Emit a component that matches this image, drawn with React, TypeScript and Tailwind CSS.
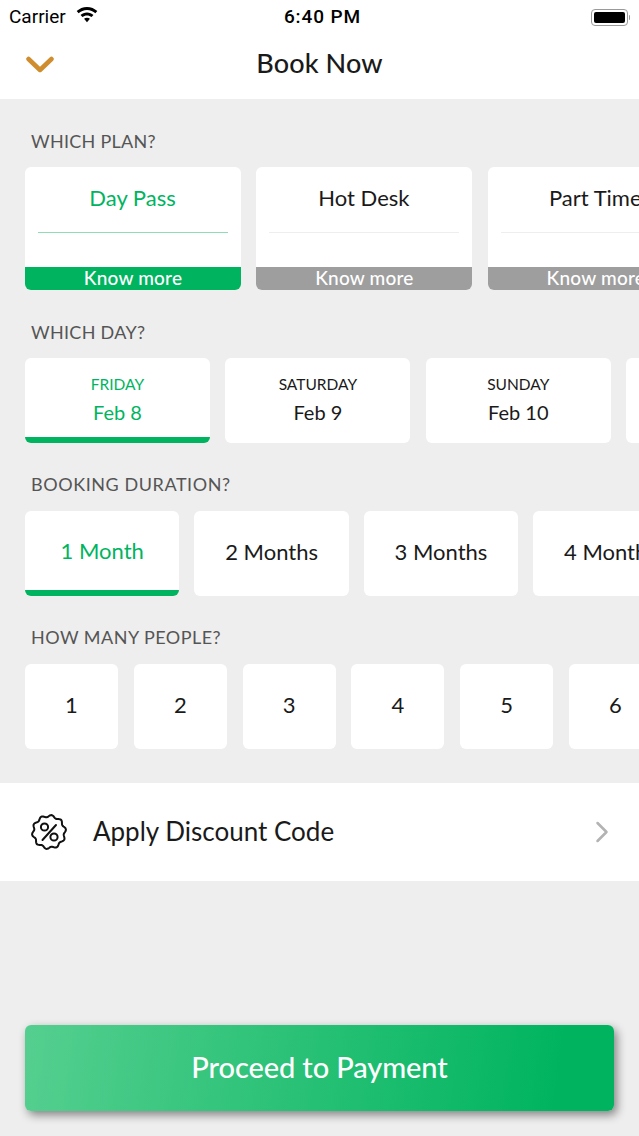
const font = { fontFamily: 'Lato, "Noto Sans", sans-serif' };

const plans = ['Day Pass', 'Hot Desk', 'Part Time'];
const days = [
  ['FRIDAY', 'Feb 8'],
  ['SATURDAY', 'Feb 9'],
  ['SUNDAY', 'Feb 10'],
  ['MONDAY', 'Feb 11'],
];
const durations = ['1 Month', '2 Months', '3 Months', '4 Months'];
const people = ['1', '2', '3', '4', '5', '6'];

const Label = ({ children, className }: { children: string; className: string }) => (
  <div className={`pl-[31px] text-[18px] leading-[22px] text-[#555555] ${className}`}>{children}</div>
);

// wavy badge outline, 10 lobes
const badge = Array.from({ length: 120 }, (_, i) => {
  const t = (i / 120) * Math.PI * 2;
  const r = 16 + 1.1 * Math.cos(10 * t + Math.PI / 2);
  return `${(18 + r * Math.cos(t)).toFixed(2)},${(18 + r * Math.sin(t)).toFixed(2)}`;
}).join(' ');

const DiscountIcon = () => (
  <svg width="36" height="36" viewBox="0 0 36 36" fill="none" stroke="#111" strokeWidth="2" strokeLinecap="round" strokeLinejoin="round">
    <polygon points={badge} />
    <circle cx="13.500" cy="13" r="3.600" />
    <circle cx="23" cy="23" r="3.600" />
    <path d="M25 11 11.500 26" />
  </svg>
);

export default function App() {
  return (
    <div className="h-[1136px] w-[639px] overflow-hidden bg-[#eeeeee] flex flex-col" style={font}>
      <div className="h-[99px] bg-white shrink-0">
        <div className="relative h-[33px] flex items-center pl-[9px] pr-[9px] pt-[1px] text-black" style={{ fontFamily: 'Roboto, "Liberation Sans", sans-serif' }}>
          <span className="text-[19px]">Carrier</span>
          <svg className="ml-[10px] mb-[3px]" width="22" height="17" viewBox="0 0 19 15" fill="black">
            <path d="M9.500 0C6 0 2.800 1.400.4 3.600l1.700 1.900C4 3.700 6.600 2.600 9.500 2.600s5.500 1.100 7.400 2.900l1.700-1.900C16.200 1.400 13 0 9.500 0z" />
            <path d="M9.500 4.800c-2.200 0-4.200.9-5.700 2.200l1.700 1.900c1.100-1 2.500-1.500 4-1.500s2.900.5 4 1.500l1.700-1.900c-1.500-1.300-3.500-2.200-5.700-2.200z" />
            <path d="M9.500 9.400c-1 0-1.900.4-2.600 1l2.600 3.100 2.600-3.100c-.7-.6-1.600-1-2.600-1z" />
          </svg>
          <span className="absolute left-0 right-0 pl-[6px] text-center text-[19px] font-medium tracking-[0.9px]">6:40 PM</span>
          <div className="ml-auto flex items-center">
            <div className="h-[17px] w-[37px] rounded-[4px] border border-[#9a9a9a] p-[2px]">
              <div className="h-full w-full rounded-[2px] bg-black" />
            </div>
            <div className="ml-[1px] h-[5px] w-[1.500px] rounded-r bg-[#9a9a9a]" />
          </div>
        </div>
        <div className="relative flex h-[62px] items-center justify-center pb-[3px]">
          <svg className="absolute left-[26px] top-[23px]" width="28" height="18" viewBox="0 0 28 18" fill="none">
            <path d="M2.500 3 14 14 25.500 3" stroke="#d08d2e" strokeWidth="4.500" strokeLinecap="round" strokeLinejoin="round" />
          </svg>
          <span className="text-[27px] font-medium leading-none tracking-[0.1px] text-[#1a1a1a]">Book Now</span>
        </div>
      </div>

      <Label className="mt-[31px] tracking-[0.28px]">WHICH PLAN?</Label>
      <div className="mt-[15px] flex gap-[15.400px] overflow-hidden pl-[25px]">
        {plans.map((p, i) => (
          <div key={p} className="flex h-[123px] w-[216px] shrink-0 flex-col overflow-hidden rounded-[6px] bg-white">
            <div className={`mt-[15px] h-[31px] pr-[1px] text-center text-[22px] leading-[31px] ${i === 0 ? 'text-[#00b45f]' : 'text-[#1a1a1a]'}`}>{p}</div>
            <div className={`mx-[13px] mt-[19px] h-px ${i === 0 ? 'bg-[#8fdcb6]' : 'bg-[#eeeeee]'}`} />
            <div className={`mt-auto h-[23px] text-center text-[19px] font-medium leading-[22px] tracking-[0.2px] text-white ${i === 0 ? 'bg-[#00b45f]' : 'bg-[#9e9e9e]'}`}>Know more</div>
          </div>
        ))}
      </div>

      <Label className="mt-[31px] tracking-[0.3px]">WHICH DAY?</Label>
      <div className="mt-[15px] flex gap-[15.400px] overflow-hidden pl-[25px]">
        {days.map(([d, date], i) => (
          <div key={d} className={`flex h-[85px] w-[185px] shrink-0 flex-col items-center overflow-hidden rounded-[6px] bg-white ${i === 0 ? 'border-b-[6px] border-[#00b45f] text-[#00b45f]' : 'text-[#1a1a1a]'}`}>
            <div className="mt-[16px] text-[15.500px] leading-[20px]">{d}</div>
            <div className="mt-[6px] text-[20px] leading-[24px]">{date}</div>
          </div>
        ))}
      </div>

      <Label className="mt-[30px] tracking-[0.57px]">BOOKING DURATION?</Label>
      <div className="mt-[16px] flex gap-[15px] overflow-hidden pl-[25px]">
        {durations.map((d, i) => (
          <div key={d} className={`flex h-[85px] w-[154.400px] shrink-0 items-center justify-center overflow-hidden rounded-[6px] bg-white text-[22px] ${i === 0 ? 'border-b-[6px] border-[#00b45f] text-[#00b45f]' : 'pb-[5px] text-[#1a1a1a]'}`}>{d}</div>
        ))}
      </div>

      <Label className="mt-[30px] tracking-[0.47px]">HOW MANY PEOPLE?</Label>
      <div className="mt-[16px] flex gap-[15.800px] overflow-hidden pl-[25px]">
        {people.map((n) => (
          <div key={n} className="flex h-[85px] w-[93px] shrink-0 items-center justify-center rounded-[6px] bg-white pb-[5px] text-[22px] text-[#1a1a1a]">{n}</div>
        ))}
      </div>

      <div className="mt-[34px] flex h-[98px] items-center bg-white pl-[31px] pr-[30px]">
        <DiscountIcon />
        <span className="ml-[26px] pb-[2px] text-[26px] text-[#1a1a1a]">Apply Discount Code</span>
        <svg className="ml-auto" width="14" height="22" viewBox="0 0 14 22" fill="none">
          <path d="M2.500 2 11.500 11 2.500 20" stroke="#b3b3b3" strokeWidth="2.500" strokeLinecap="round" strokeLinejoin="round" />
        </svg>
      </div>

      <div className="mt-[144px] px-[25px]">
        <button className="flex h-[86px] w-[589px] items-center justify-center rounded-[6px] bg-[linear-gradient(98deg,#55cf8f_0%,#00b45f_90%)] pb-[3px] text-[29px] font-medium tracking-[-0.1px] text-white shadow-[3px_4px_10px_rgba(0,0,0,0.45)]">
          Proceed to Payment
        </button>
      </div>
    </div>
  );
}
